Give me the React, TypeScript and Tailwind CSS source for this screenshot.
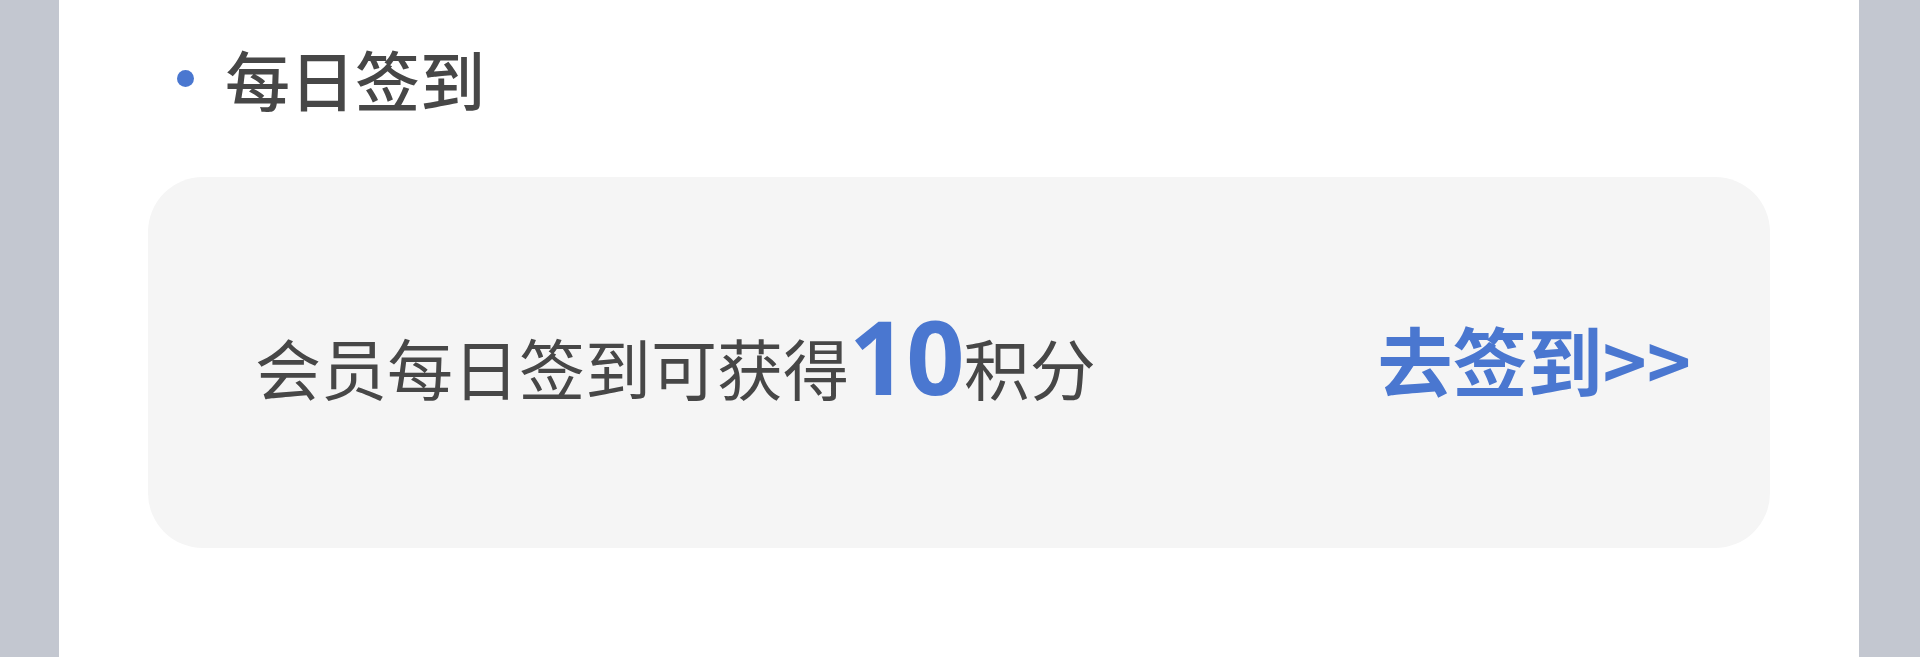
import React from "react";

const font = { fontFamily: '"Noto Sans CJK SC", "Noto Sans", sans-serif' };

const App = () => {
  return (
    <div className="flex h-[657px] w-full bg-[#c3c7d0]" style={font}>
      <div className="ml-[59px] mr-[61px] flex-1 bg-white">
        {/* section title */}
        <div className="flex items-center pl-[118px] pt-[46px]">
          <span className="h-[17px] w-[17px] rounded-full bg-[#4a77d0]" />
          <span className="ml-[31px] text-[65px] font-medium leading-none text-[#474747]">
            每日签到
          </span>
        </div>

        {/* sign-in card */}
        <div className="mx-[89px] mt-[66px] flex h-[371px] items-center justify-between rounded-[55px] bg-[#f5f5f5] pl-[107px] pr-[79px]">
          <div className="mb-[14px] flex items-baseline text-[#474747]">
            <span className="text-[66px] leading-none">会员每日签到可获得</span>
            <span className="font-['Open_Sans'] text-[102px] font-bold leading-none tracking-[-1px] text-[#4a77d0]">
              10
            </span>
            <span className="text-[66px] leading-none">积分</span>
          </div>
          <button className="mb-[8px] text-[75px] font-bold leading-none text-[#4a77d0]">
            去签到&gt;&gt;
          </button>
        </div>
      </div>
    </div>
  );
};

export default App;
